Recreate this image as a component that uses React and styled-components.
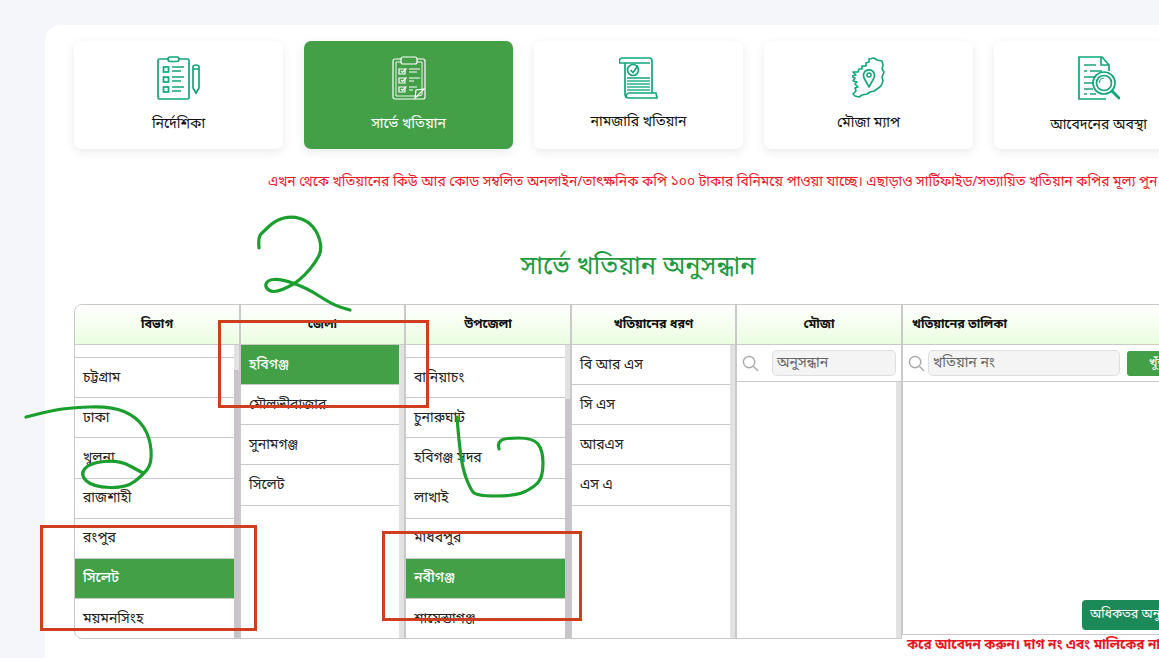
import React from "react";
import styled, { createGlobalStyle } from "styled-components";

const GlobalStyle = createGlobalStyle`
  html, body { margin: 0; padding: 0; height: 100%; overflow: hidden; background: #f4f6fa; }
  body { font-family: "Noto Sans Bengali", "Noto Serif Bengali", "Lohit Bengali", "Liberation Serif", serif; }
`;

const Page = styled.div`
  width: 1159px;
  height: 658px;
  position: relative;
  overflow: hidden;
  padding: 25px 0 0 45px;
  box-sizing: border-box;
`;

const Panel = styled.main`
  background: #fff;
  border-top-left-radius: 16px;
  height: 633px;
  padding: 16px 0 0 29px;
  box-sizing: border-box;
  overflow: hidden;
`;

const CardRow = styled.div`
  display: flex;
  gap: 21px;
  width: 1200px;
`;

const Card = styled.div`
  width: 209px;
  height: 108px;
  flex: none;
  border-radius: 7px;
  background: ${(p) => (p.$active ? "#43a047" : "#fff")};
  color: ${(p) => (p.$active ? "#fff" : "#111")};
  box-shadow: 0 3px 10px rgba(40, 50, 70, 0.1);
  display: flex;
  flex-direction: column;
  align-items: center;
  padding-top: 15px;
  box-sizing: border-box;
  font-size: 14px;
`;

const CardIcon = styled.div`
  height: 44px;
  display: flex;
  align-items: center;
  justify-content: center;
`;

const CardLabel = styled.div`
  margin-top: ${(p) => p.$gap}px;
`;

const Notice = styled.div`
  color: #f0182c;
  font-size: 13.9px;
  white-space: nowrap;
  margin: 24px 0 0 194px;
  line-height: 20px;
`;

const Title = styled.h2`
  color: #1f9a3f;
  font-size: 25.4px;
  font-weight: 400;
  text-align: center;
  margin: 57px 0 0;
  width: 1128px;
  line-height: 36px;
`;

const Table = styled.div`
  display: flex;
  width: 1200px;
  height: 335px;
  margin-top: 18px;
  border: 1px solid #c9c9c9;
  border-radius: 8px 0 0 8px;
  box-sizing: border-box;
  overflow: hidden;
`;

const Column = styled.div`
  width: ${(p) => p.$w}px;
  height: ${(p) => (p.$short ? "330px" : "auto")};
  flex: none;
  border-right: 2px solid #c9c9c9;
  border-bottom: ${(p) => (p.$short ? "1px solid #c9c9c9" : "none")};
  box-sizing: border-box;
  display: flex;
  flex-direction: column;
`;

const Head = styled.div`
  height: 39px;
  flex: none;
  background: linear-gradient(#fff, #eafde0);
  border-bottom: 1px solid #c9c9c9;
  font-size: 12.5px;
  font-weight: 700;
  color: #111;
  display: flex;
  align-items: center;
  justify-content: ${(p) => (p.$left ? "flex-start" : "center")};
  padding-left: ${(p) => (p.$left ? "9px" : "0")};
`;

const Body = styled.div`
  flex: 1;
  display: flex;
  min-height: 0;
`;

const List = styled.div`
  flex: 1;
  min-width: 0;
  margin-top: ${(p) => p.$offset || 0}px;
`;

const Item = styled.div`
  height: 40.15px;
  box-sizing: border-box;
  display: flex;
  align-items: center;
  padding: 1px 0 0 8px;
  font-size: 14px;
  color: #222;
  border-bottom: 1px solid #c9c9c9;
  background: ${(p) => (p.$active ? "#43a047" : "transparent")};
  ${(p) => p.$active && "color: #fff; font-weight: 500;"}
`;

const Track = styled.div`
  width: 5px;
  flex: none;
  background: #e2e2e2;
  position: relative;
`;

const Thumb = styled.div`
  position: absolute;
  left: 0;
  right: 0;
  bottom: 0;
  top: ${(p) => p.$top}px;
  background: #c8c4c9;
`;

const SearchRow = styled.div`
  height: 36px;
  flex: none;
  display: flex;
  align-items: center;
  gap: ${(p) => p.$gap}px;
  padding: 0 5px;
  border-bottom: 1px solid #c9c9c9;
`;

const SearchGlyph = styled.svg`
  flex: none;
`;

const SearchInput = styled.div`
  flex: ${(p) => (p.$w ? "none" : 1)};
  width: ${(p) => p.$w || 0}px;
  height: 26px;
  box-sizing: border-box;
  border: 1px solid #dcdfe3;
  border-radius: 5px;
  background: #f4f4f4;
  font-size: 14px;
  color: #666;
  padding-left: 4px;
  display: flex;
  align-items: center;
`;

const FindButton = styled.div`
  width: 60px;
  height: 25px;
  flex: none;
  margin-left: 4px;
  background: #43a047;
  border-radius: 3px;
  color: #fff;
  font-size: 13px;
  display: flex;
  align-items: center;
  padding-left: 22px;
  box-sizing: border-box;
`;

const MoreButton = styled.div`
  position: absolute;
  left: 1082px;
  top: 600px;
  width: 100px;
  height: 30px;
  background: #1c8a58;
  border-radius: 4px;
  color: #fff;
  font-size: 12.5px;
  display: flex;
  align-items: center;
  padding-left: 8px;
  box-sizing: border-box;
  white-space: nowrap;
`;

const FootNotice = styled.div`
  position: absolute;
  left: 902px;
  top: 635px;
  width: 257px;
  height: 23px;
  background: #fff;
  padding-left: 5px;
  box-sizing: border-box;
  color: #e8141f;
  font-size: 13.5px;
  font-weight: 700;
  line-height: 23px;
  white-space: nowrap;
  overflow: hidden;
`;

const Mark = styled.div`
  position: absolute;
  left: ${(p) => p.$x}px;
  top: ${(p) => p.$y}px;
  width: ${(p) => p.$w}px;
  height: ${(p) => p.$h}px;
  border: 3px solid #cf3f1f;
  box-sizing: border-box;
`;

const Scribble = styled.svg`
  position: absolute;
  left: 0;
  top: 0;
  pointer-events: none;
`;

const Search = () => (
  <SearchGlyph width="17" height="17" viewBox="0 0 18 18" fill="none" stroke="#aaa" strokeWidth="1.5">
    <circle cx="7.5" cy="7.5" r="6" />
    <path d="M12 12l5 5" />
  </SearchGlyph>
);

const IconGuide = () => (
  <svg width="43" height="44" viewBox="0 0 43 44" fill="none" stroke="#12a578" strokeWidth="1.7">
    <rect x="1" y="3" width="31" height="40" rx="1.5" />
    <rect x="11" y="1" width="11" height="4.5" rx="2.2" fill="#fff" />
    <rect x="6.5" y="11" width="5" height="5" />
    <rect x="6.5" y="21" width="5" height="5" />
    <rect x="6.5" y="31" width="5" height="5" />
    <path d="M15 11h12M15 15h9M15 21h12M15 25h9M15 31h12M15 35h9" />
    <path d="M39 9c-2 0-3 1-3 2v21l3 5 3-5V11c0-1-1-2-3-2zM36 13h6" />
  </svg>
);

const IconSurvey = () => (
  <svg width="34" height="44" viewBox="0 0 34 44" fill="none" stroke="#fff" strokeWidth="1.2">
    <rect x="1" y="3" width="32" height="40" rx="2" />
    <path d="M4 6h26v33l-4 1H4z" strokeWidth="0.9" />
    <rect x="9" y="1" width="16" height="7" rx="2" fill="#43a047" />
    <path d="M7 13h6v5H7zM7 22h6v5H7zM7 31h6v5H7z" />
    <path d="M9 15l1.5 1.5 4-4M9 24l1.5 1.5 4-4M9 33l1.5 1.5 4-4" />
    <path d="M17 13h11M17 16h8M17 22h11M17 25h5M17 31h8M17 34h4" />
    <path d="M23 42l9-9-8 1z" fill="#43a047" />
  </svg>
);

const IconRecord = () => (
  <svg width="39" height="42" viewBox="0 0 39 42" fill="none" stroke="#12a578" strokeWidth="1.7">
    <path d="M3 1h28c2 0 2 2 2 4v31" />
    <path d="M3 1C1 1 0 3 0.5 6H31" />
    <path d="M6 6v31c0 3 2 4 4 4h28l-1-5H10c-1 0-3 1-3 5" />
    <circle cx="14" cy="13" r="5.5" />
    <path d="M11.5 13l2.5 2.5 5-7" />
    <path d="M8 21h23" />
    <path d="M8 24h23M8 27h23M8 30h23M8 33h23" strokeWidth="2" stroke="#5cc6a4" />
  </svg>
);

const IconMap = () => (
  <svg width="33" height="42" viewBox="0 0 33 42" fill="none" stroke="#12a578" strokeWidth="1.6" strokeLinejoin="round">
    <path d="M14 6l3-1 0-3 5-1 3 2 5 1 1 4-1 4 2 3-2 5 1 4-2 5-4 3-3 2-4 1-3 2-5 1-3 2-4-1-2-2 3-3-1-3 3-1-3-3 2-2-4-1 2-3-4-2 5-1-3-3 5 0 1-3 3 0 0-3 4 0z" />
    <path d="M17 30l-5-9a5.6 5.6 0 1 1 10 0z" fill="#fff" />
    <circle cx="17" cy="18" r="2" />
  </svg>
);

const IconStatus = () => (
  <svg width="42" height="44" viewBox="0 0 42 44" fill="none" stroke="#12a578" strokeWidth="1.7">
    <path d="M31 15V9l-7-8H1v42h27" />
    <path d="M23 1v8h8" />
    <path d="M6 9h12M6 15h3M12 15h12M6 21h13M6 27h9M6 33h9M6 38h3M12 38h6" />
    <circle cx="26" cy="27" r="11" fill="#fff" />
    <circle cx="26" cy="27" r="7.5" />
    <path d="M21.5 27c0-3 2-5 4.5-5" strokeWidth="1.2" />
    <path d="M34 35l7 7" strokeWidth="3" strokeLinecap="round" />
  </svg>
);

// joins hand picked points with curves through their midpoints
const smooth = (pts) => {
  let d = `M${pts[0][0]} ${pts[0][1]}`;
  for (let i = 1; i < pts.length - 1; i++) {
    const mx = (pts[i][0] + pts[i + 1][0]) / 2;
    const my = (pts[i][1] + pts[i + 1][1]) / 2;
    d += ` Q${pts[i][0]} ${pts[i][1]} ${mx} ${my}`;
  }
  const last = pts[pts.length - 1];
  return `${d} L${last[0]} ${last[1]}`;
};

const strokeTwo = [
  [259, 248], [258, 237], [264, 231], [276, 220], [292, 216], [308, 221], [318, 233], [322, 250],
  [315, 263], [305, 275], [293, 285], [274, 293], [265, 288], [267, 280], [281, 279], [307, 288],
  [333, 305], [350, 310],
];
const strokeThree = [
  [26, 417], [45, 412], [67, 408], [111, 406], [137, 417], [150, 437], [152, 463], [143, 475],
  [126, 488], [93, 487], [80, 475], [89, 463], [119, 460], [143, 473],
];
const strokeSix = [
  [457, 417], [459, 443], [463, 470], [470, 488], [476, 496], [515, 496], [533, 488], [543, 477],
  [543, 450], [533, 438], [504, 438], [498, 443], [499, 449],
];

const cards = [
  { label: "নির্দেশিকা", icon: <IconGuide />, gap: 15 },
  { label: "সার্ভে খতিয়ান", icon: <IconSurvey />, gap: 15, active: true },
  { label: "নামজারি খতিয়ান", icon: <IconRecord />, gap: 13 },
  { label: "মৌজা ম্যাপ", icon: <IconMap />, gap: 14 },
  { label: "আবেদনের অবস্থা", icon: <IconStatus />, gap: 16 },
];

const divisions = ["চট্টগ্রাম", "ঢাকা", "খুলনা", "রাজশাহী", "রংপুর", "সিলেট", "ময়মনসিংহ"];
const districts = ["হবিগঞ্জ", "মৌলভীবাজার", "সুনামগঞ্জ", "সিলেট"];
const upazilas = ["বানিয়াচং", "চুনারুঘাট", "হবিগঞ্জ সদর", "লাখাই", "মাধবপুর", "নবীগঞ্জ", "শায়েস্তাগঞ্জ"];
const types = ["বি আর এস", "সি এস", "আরএস", "এস এ"];

const App = () => (
  <Page>
    <GlobalStyle />
    <Panel>
      <CardRow>
        {cards.map((c) => (
          <Card key={c.label} $active={c.active}>
            <CardIcon>{c.icon}</CardIcon>
            <CardLabel $gap={c.gap}>{c.label}</CardLabel>
          </Card>
        ))}
      </CardRow>
      <Notice>এখন থেকে খতিয়ানের কিউ আর কোড সম্বলিত অনলাইন/তাৎক্ষনিক কপি ১০০ টাকার বিনিময়ে পাওয়া যাচ্ছে। এছাড়াও সার্টিফাইড/সত্যায়িত খতিয়ান কপির মূল্য পুন</Notice>
      <Title>সার্ভে খতিয়ান অনুসন্ধান</Title>
      <Table>
        <Column $w={166}>
          <Head>বিভাগ</Head>
          <Body>
            <List $offset={-27}>
              <Item />
              {divisions.map((d) => <Item key={d} $active={d === "সিলেট"}>{d}</Item>)}
            </List>
            <Track><Thumb $top={25} /></Track>
          </Body>
        </Column>
        <Column $w={165}>
          <Head>জেলা</Head>
          <Body>
            <List>
              {districts.map((d) => <Item key={d} $active={d === "হবিগঞ্জ"}>{d}</Item>)}
            </List>
            <Track />
          </Body>
        </Column>
        <Column $w={166}>
          <Head>উপজেলা</Head>
          <Body>
            <List $offset={-27}>
              <Item />
              {upazilas.map((d) => <Item key={d} $active={d === "নবীগঞ্জ"}>{d}</Item>)}
            </List>
            <Track><Thumb $top={54} /></Track>
          </Body>
        </Column>
        <Column $w={165}>
          <Head>খতিয়ানের ধরণ</Head>
          <Body>
            <List>
              {types.map((d) => <Item key={d}>{d}</Item>)}
            </List>
            <Track />
          </Body>
        </Column>
        <Column $w={166}>
          <Head>মৌজা</Head>
          <SearchRow $gap={13}><Search /><SearchInput>অনুসন্ধান</SearchInput></SearchRow>
          <Body><List /><Track /></Body>
        </Column>
        <Column $w={300} $short>
          <Head $left>খতিয়ানের তালিকা</Head>
          <SearchRow $gap={3}><Search /><SearchInput $w={192}>খতিয়ান নং</SearchInput><FindButton>খুঁজুন</FindButton></SearchRow>
        </Column>
      </Table>
    </Panel>
    <MoreButton>অধিকতর অনুসন্ধান</MoreButton>
    <FootNotice>করে আবেদন করুন। দাগ নং এবং মালিকের নাম</FootNotice>
    <Mark $x={218} $y={320} $w={211} $h={88} />
    <Mark $x={40} $y={525} $w={217} $h={106} />
    <Mark $x={382} $y={531} $w={200} $h={90} />
    <Scribble width="1159" height="658" viewBox="0 0 1159 658" fill="none" stroke="#1a9e2e" strokeWidth="3.2" strokeLinecap="round" strokeLinejoin="round">
      <path d={smooth(strokeTwo)} />
      <path d={smooth(strokeThree)} />
      <path d={smooth(strokeSix)} />
    </Scribble>
  </Page>
);

export default App;
